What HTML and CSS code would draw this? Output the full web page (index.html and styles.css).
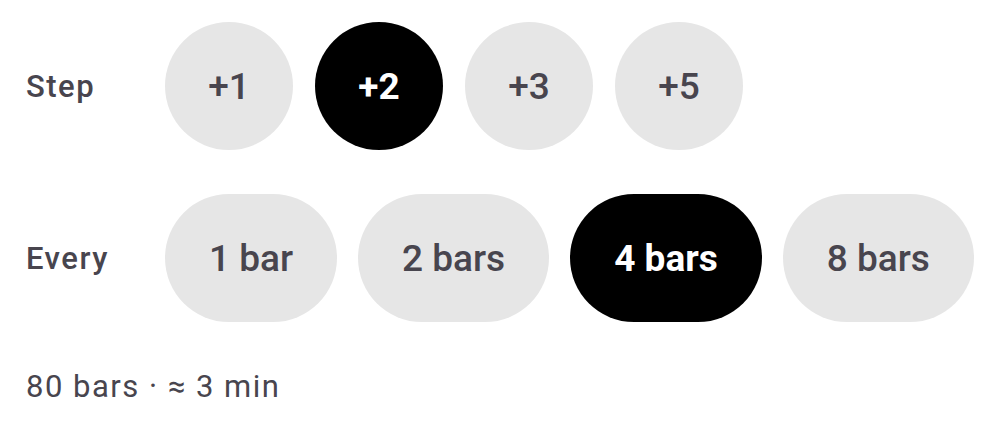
FILE: index.html
```html
<!DOCTYPE html>
<html lang="en">
<head>
    <meta charset="UTF-8">
    <meta name="viewport" content="width=device-width, initial-scale=1.0">
    <title>Transpose</title>
    <link rel="stylesheet" href="styles.css">
</head>
<body>
    <div class="panel">
        <div class="row">
            <span class="row-label">Step</span>
            <div class="chips">
                <button class="chip round">+1</button>
                <button class="chip round selected">+2</button>
                <button class="chip round">+3</button>
                <button class="chip round">+5</button>
            </div>
        </div>

        <div class="row">
            <span class="row-label">Every</span>
            <div class="chips">
                <button class="chip">1 bar</button>
                <button class="chip">2 bars</button>
                <button class="chip selected">4 bars</button>
                <button class="chip">8 bars</button>
            </div>
        </div>

        <div class="summary">80 bars · ≈ 3 min</div>
    </div>
</body>
</html>
```

FILE: styles.css
```css
body {
    margin: 0;
    background-color: #fff;
    font-family: Roboto, "Noto Sans", sans-serif;
    color: #48454e;
}
.panel {
    padding: 22px 26px;
    display: flex;
    flex-direction: column;
    gap: 44px;
}
.row {
    display: flex;
    align-items: center;
}
.row-label {
    width: 139px;
    flex-shrink: 0;
    font-size: 31px;
    font-weight: 500;
    letter-spacing: 1.5px;
}
.chips {
    display: flex;
    gap: 21px;
}
.chip {
    flex-shrink: 0;
    height: 128px;
    padding: 0 44px;
    border: none;
    border-radius: 64px;
    background-color: #e6e6e6;
    color: #48454e;
    font-family: inherit;
    font-size: 37px;
    font-weight: 500;
    white-space: nowrap;
    cursor: pointer;
}
.chip.round {
    width: 128px;
    padding: 0;
}
.chips .round + .round {
    margin-left: 1px;
}
.chip.selected {
    background-color: #000;
    color: #fff;
    font-weight: 700;
}
.summary {
    margin-top: 2px;
    font-size: 31px;
    letter-spacing: 1.5px;
}
```
